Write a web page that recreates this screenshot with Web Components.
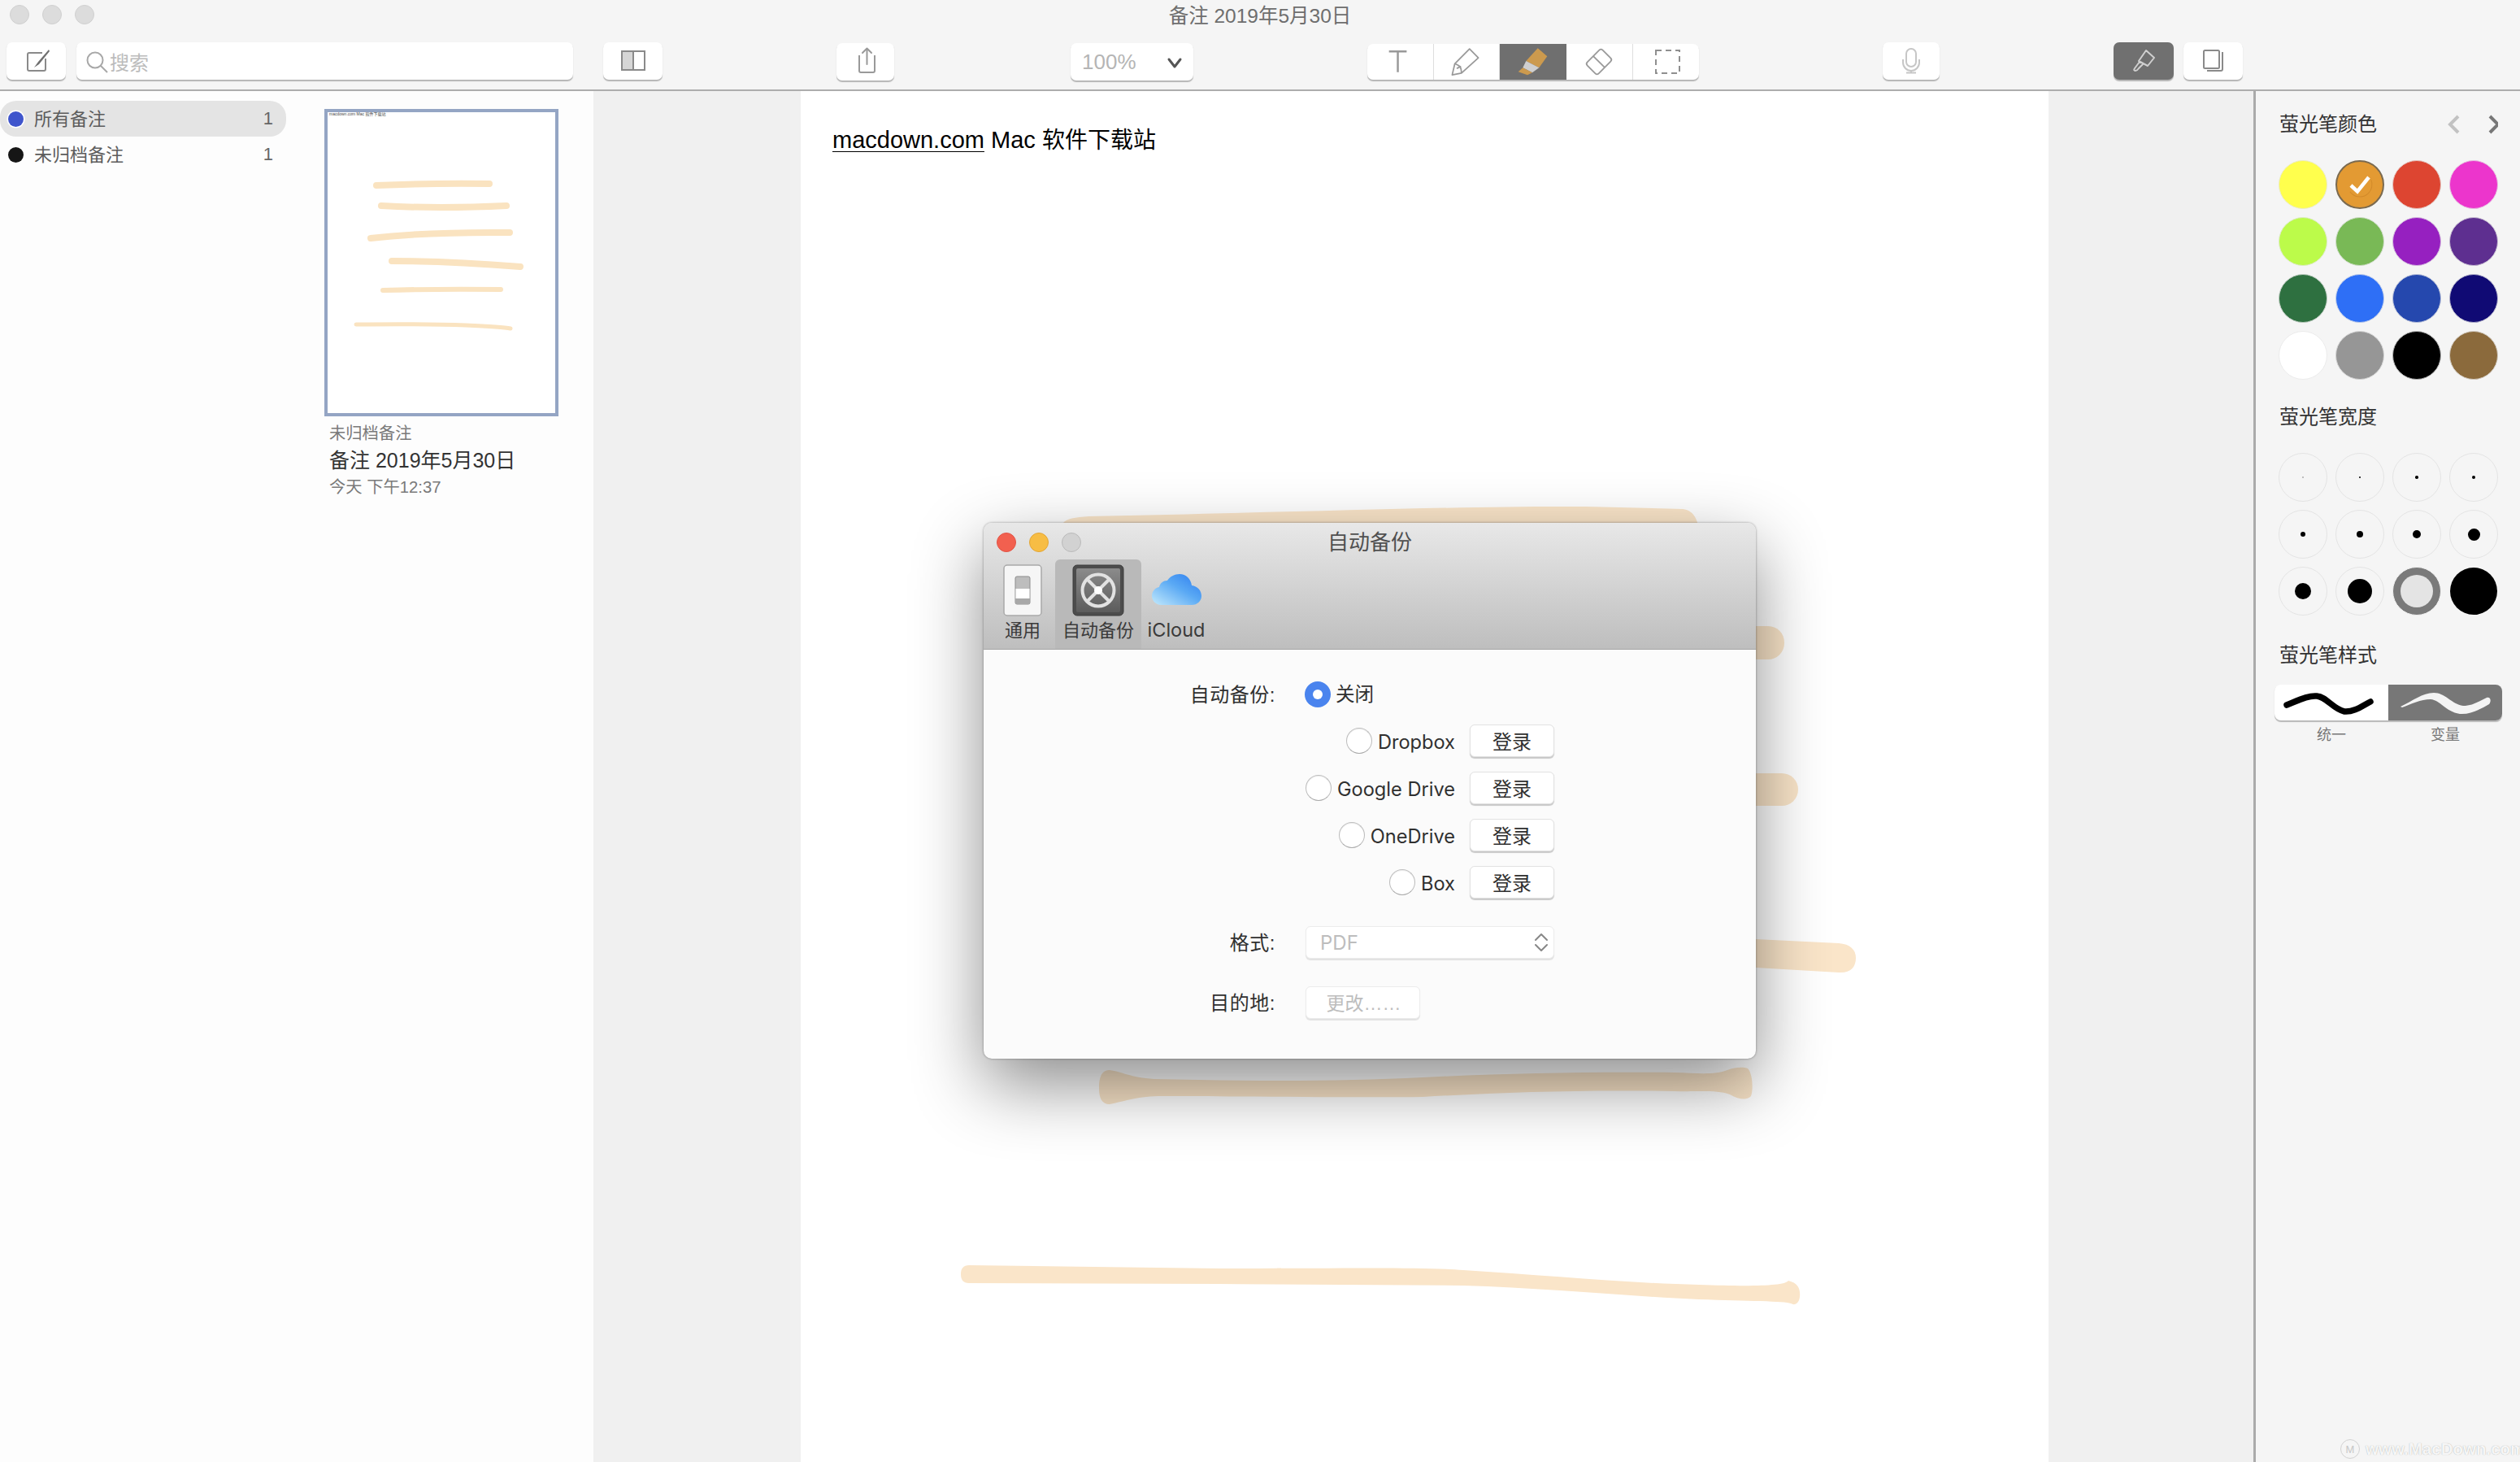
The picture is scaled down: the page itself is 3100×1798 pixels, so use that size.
<!DOCTYPE html>
<html lang="zh"><head><meta charset="utf-8"><title>备注</title>
<style>
html,body{margin:0;padding:0;width:3100px;height:1798px;overflow:hidden;background:#fff}
body{font-family:"Liberation Sans","Noto Sans CJK SC",sans-serif}
</style></head>
<body><n-app></n-app>
<script>
const def=(name,html)=>customElements.define(name,class extends HTMLElement{
  constructor(){super();this.attachShadow({mode:'open'}).innerHTML=html;}
});
const ST='fill="none" stroke-linecap="round" stroke-linejoin="round"';

def('n-lights',`<style>
:host{display:flex;gap:16px;align-items:center}
i{display:block;width:24px;height:24px;border-radius:50%;box-sizing:border-box;background:var(--a,#dcdcdc);border:1px solid var(--ab,#d0d0d0)}
i:nth-of-type(2){background:var(--b,#dcdcdc);border-color:var(--bb,#d0d0d0)}
i:nth-of-type(3){background:var(--c,#dcdcdc);border-color:var(--cb,#d0d0d0)}
</style><i></i><i></i><i></i>`);

def('n-btn',`<style>
:host{display:flex;box-sizing:border-box;flex:none;height:46px;background:#fff;border-radius:7px;box-shadow:0 1.5px 1px rgba(0,0,0,.26);align-items:center;overflow:hidden}
::slotted(svg){display:block}
</style><slot></slot>`);

def('n-toolbar',`<style>
:host{display:block;height:110px;background:#f5f5f5;border-bottom:2px solid #adadad;flex:none;color:#707070}
.t{display:grid;grid-template-columns:1fr auto 1fr;height:40px;align-items:center}
n-lights{margin-left:12px;margin-top:-4px}
.title{font-size:24.500px;line-height:40px;color:#6e6e6e}
.r{display:flex;margin-top:12px;padding-left:8px;align-items:flex-start}
.srch{color:#bcbcbc;font-size:24px}
.seg{height:100%;display:block;flex:none;border-right:1.5px solid #dedede;box-sizing:border-box}
.seg:last-child{border:0}
.z{color:#b5b5b5;font-size:26px;padding-left:14px;flex:1;line-height:46px}
</style>
<div class="t"><n-lights></n-lights><div class="title">备注 2019年5月30日</div><span></span></div>
<div class="r">
<n-btn style="width:73px"><svg width="73" height="46" viewBox="0 0 73 46"><path d="M44 13H28a2 2 0 0 0-2 2v18a2 2 0 0 0 2 2h18a2 2 0 0 0 2-2V20" fill="none" stroke="#8a8a8a" stroke-width="2"/><path d="M52 9l-13 15-5 7 6-4 13-16z" fill="#6f6f6f"/></svg></n-btn>
<n-btn class="srch" style="width:611px;margin-left:13px"><svg width="41" height="46" viewBox="0 0 41 46"><circle cx="23" cy="22" r="9.500" fill="none" stroke="#a8a8a8" stroke-width="2"/><path d="M30 29l8 8" stroke="#a8a8a8" stroke-width="2"/></svg>搜索</n-btn>
<n-btn style="width:73px;margin-left:37px"><svg width="73" height="46" viewBox="0 0 73 46"><rect x="23" y="11" width="14" height="23" fill="#d6d6d6"/><rect x="23" y="11" width="28" height="23" fill="none" stroke="#8a8a8a" stroke-width="2"/><path d="M37 11v23" stroke="#8a8a8a" stroke-width="2"/></svg></n-btn>
<n-btn style="width:71px;margin-left:214px;margin-top:1px"><svg width="71" height="46" viewBox="0 0 71 46"><path d="M29 16h-1v18a2 2 0 0 0 2 2h15a2 2 0 0 0 2-2V16h-1" fill="none" stroke="#999" stroke-width="2"/><path d="M37.500 26V7M32 12l5.500-5.500L43 12" ${ST} stroke="#999" stroke-width="2"/></svg></n-btn>
<n-btn style="width:151px;margin-left:217px;margin-top:1px"><span class="z">100%</span><svg width="50" height="46" viewBox="0 0 50 46" style="flex:none"><path d="M20 20l7 9 7-9" ${ST} stroke="#555" stroke-width="3"/></svg></n-btn>
<n-btn style="width:408px;height:44px;margin-left:214px;margin-top:2px">
<svg class="seg" width="82" viewBox="0 0 82 44"><path d="M27 9h22M38 9v26" fill="none" stroke="#999" stroke-width="2.500"/></svg>
<svg class="seg" width="81" viewBox="0 0 81 44"><path d="M44.300 6l11 11-21 19-11.600 2.300L26 24.300zM26 24.300Q30 26 32.700 28 34 31 34.300 36M29 30l4-2" ${ST} stroke="#999" stroke-width="1.800"/></svg>
<svg class="seg" width="82" viewBox="0 0 82 44" style="background:#6f6f6f;border:0"><path d="M46.700 5.300l11.600 10-10 14-16-8.300z" fill="#cc9a4e"/><path d="M32.300 21l16 8.300-8.300 6-11.700-6z" fill="#cfcfcf"/><path d="M28.300 29.300L40 35.300 34 38.300l-11.300-4z" fill="#cc9a4e"/></svg>
<svg class="seg" width="82" viewBox="0 0 82 44"><g transform="translate(40.500 22) rotate(45)" fill="none" stroke="#999" stroke-width="1.800"><rect x="-10" y="-13.500" width="20" height="27" rx="3"/><path d="M-10 0h20"/></g></svg>
<svg class="seg" width="81" viewBox="0 0 81 44"><rect x="28" y="8" width="29" height="28" fill="none" stroke="#8f8f8f" stroke-width="2" stroke-dasharray="7 5"/></svg>
</n-btn>
<n-btn style="width:70px;margin-left:226px"><svg width="70" height="46" viewBox="0 0 70 46"><rect x="29" y="8" width="12" height="22" rx="6" fill="none" stroke="#c6c6c6" stroke-width="2"/><path d="M25 21v4a10 10 0 0 0 20 0v-4M35 35v2M29 37.500h12" fill="none" stroke="#c6c6c6" stroke-width="2"/></svg></n-btn>
<n-btn style="width:74px;margin-left:214px;background:#707070"><svg width="74" height="46" viewBox="0 0 74 46"><path d="M40 10l10 9-8 10-11-6zM32 24l-6 8q-2 3 1 3 2 0 4-3l5-5" ${ST} stroke="#cfcfcf" stroke-width="2"/></svg></n-btn>
<n-btn style="width:73px;margin-left:12px"><svg width="73" height="46" viewBox="0 0 73 46"><rect x="25" y="10" width="19" height="22" rx="1.500" fill="none" stroke="#8a8a8a" stroke-width="2"/><path d="M48 12v21a2 2 0 0 1-2 2H29" fill="none" stroke="#8a8a8a" stroke-width="2"/></svg></n-btn>
</div>`);

def('n-row',`<style>
:host{display:flex;align-items:center;height:44px;width:352px;box-sizing:border-box;border-radius:20px;font-size:22px;color:#5c5c5c;padding-left:10px;padding-right:16px}
i{width:19px;height:19px;border-radius:50%;background:var(--dot);box-shadow:0 0 0 1.500px #fff;margin-right:13px;flex:none}
span{flex:1;padding-bottom:4px}
b{font-weight:400;font-size:22px;color:#666;padding-bottom:1px}
</style><i></i><span><slot></slot></span><b>1</b>`);

def('n-sidebar',`<style>
:host{display:block;width:352px;flex:none;background:#fdfdfd;padding-top:12px}
</style><n-row style="--dot:#3f55cc;background:#e4e4e4">所有备注</n-row><n-row style="--dot:#161616">未归档备注</n-row>`);

def('n-list',`<style>
:host{display:block;width:378px;flex:none;background:#fdfdfd;padding:22px 0 0 47px;box-sizing:border-box}
.th{width:288px;height:378px;box-sizing:border-box;border:4px solid #94a5c4;background:#fff;position:relative}
.th svg{display:block;position:absolute;left:-4px;top:-4px}
.tt{font-size:5px;line-height:5px;color:#444;margin:0 0 0 2px;white-space:nowrap}
.m{margin:5px 0 0 6px;line-height:33px;color:#7a7a7a;font-size:20.300px;white-space:nowrap}
.m b{display:block;font-weight:400;font-size:25px;color:#333}
</style>
<div class="th"><div class="tt">macdown.com Mac 软件下载站</div>
<svg width="288" height="378" viewBox="399 134 288 378" fill="none" stroke="#fae3c0" stroke-linecap="round">
<path d="M463 228q70-3 139-2" stroke-width="8"/>
<path d="M469 253q70 4 154 0" stroke-width="8"/>
<path d="M456 293q70-8 171-7" stroke-width="8"/>
<path d="M482 321q70 0 158 7" stroke-width="8"/>
<path d="M471 357q70-2 145-1" stroke-width="6"/>
<path d="M438 399q90-1 135 1t55 4" stroke-width="5"/>
</svg></div>
<div class="m">未归档备注<b>备注 2019年5月30日</b>今天 下午12:37</div>`);

def('n-doc',`<style>
:host{display:block;width:1535px;flex:none;background:#fff;position:relative;overflow:hidden}
svg{position:absolute;left:0;top:0}
p{margin:0;padding:40px 0 0 39px;font-size:29px;line-height:40px;color:#000;position:relative}
u{text-decoration:underline;text-decoration-thickness:1px;text-underline-offset:4px}
span{font-size:28px}
</style>
<svg width="1535" height="1686" viewBox="985 112 1535 1686" fill="#fae5c9">
<path d="M1304 680L1308 643C1312 638 1322 636 1340 635C1600 630 1800 622 1950 623L2070 626C2085 628 2092 640 2092 680Z"/>
<rect x="2000" y="770" width="195" height="41" rx="20"/>
<rect x="2000" y="951" width="212" height="40" rx="20"/>
<path d="M2000 1152L2160 1155L2262 1160C2276 1161 2283 1168 2283 1178C2283 1190 2276 1197 2262 1196L2160 1190L2000 1190Z"/>
<path d="M1352 1338C1352 1320 1358 1316 1365 1316C1380 1318 1390 1325 1420 1327C1550 1330 1650 1330 1750 1325C1850 1320 1950 1318 2060 1319C2090 1320 2110 1322 2125 1316C2135 1312 2145 1312 2150 1314C2156 1320 2157 1340 2154 1348C2150 1353 2140 1353 2128 1346C2110 1340 2090 1343 2060 1342C1950 1340 1850 1343 1750 1349C1650 1350 1500 1348 1430 1348C1400 1348 1385 1354 1365 1358C1355 1358 1352 1350 1352 1338Z"/>
<path d="M1182 1567C1182 1560 1185 1556 1192 1556L1500 1560C1650 1560 1750 1558 1800 1562C1900 1568 2000 1578 2090 1580C2150 1582 2195 1582 2200 1575C2212 1578 2215 1585 2214 1595C2213 1603 2208 1606 2203 1603C2195 1600 2150 1600 2090 1598C2000 1594 1900 1584 1800 1581L1500 1579L1192 1578C1185 1578 1182 1574 1182 1567Z"/>
</svg>
<p><u>macdown.com</u> Mac <span>软件下载站</span></p>`);

def('n-swatch',`<style>
:host{display:flex;align-items:center;justify-content:center;width:60px;height:60px;box-sizing:border-box;border-radius:50%;background:var(--c);border:1px solid color-mix(in srgb,var(--c) 22%,#e6e6e6)}
</style><slot></slot>`);

def('n-dot',`<style>
:host{display:flex;align-items:center;justify-content:center;width:60px;height:60px;box-sizing:border-box;border-radius:50%;border:1.500px solid #e4e4e4}
i{display:block;width:var(--s);height:var(--s);border-radius:50%;background:var(--d,#000)}
</style><i></i>`);

def('n-panel',`<style>
:host{display:block;width:325px;flex:none;background:#f5f5f5;padding:24px 0 0 28px;box-sizing:border-box;position:relative}
h4{margin:0 0 0 1px;font-weight:400;font-size:24px;line-height:34px;color:#333;display:flex;align-items:center}
h4 svg{margin-left:83px}
.g{display:grid;grid-template-columns:repeat(4,60px);gap:10px}
.c1{margin-top:27px}
.seg{display:flex;margin:19px 0 0 -5px;width:280px;height:44px;border-radius:8px;overflow:hidden;box-shadow:0 1.500px 1px rgba(0,0,0,.25);background:#fff}
.seg svg{display:block;flex:none}
.lb{display:flex;margin:6px 0 0 -5px;width:280px;font-size:18px;line-height:24px;color:#777;text-align:center}
.lb span{flex:1}
.wm{position:absolute;left:104px;top:1657px;display:flex;align-items:center;gap:7px;color:#f6f6f6;font:bold 20.500px "Liberation Sans",sans-serif;text-shadow:0 0 1px #a0a0a0;white-space:nowrap;line-height:26px}
.wm i{display:flex;align-items:center;justify-content:center;width:24px;height:24px;box-sizing:border-box;border:1.500px solid #d2d2d2;border-radius:50%;font:400 13px "Liberation Sans",sans-serif;color:#c8c8c8;text-shadow:none}
</style>
<h4>萤光笔颜色<svg width="66" height="24" viewBox="0 0 66 24"><path d="M17 2L7 12l10 10" fill="none" stroke="#c2c2c2" stroke-width="4"/><path d="M56 2l10 10-10 10" fill="none" stroke="#777" stroke-width="4"/></svg></h4>
<div class="g c1">
<n-swatch style="--c:#ffff4d"></n-swatch>
<n-swatch style="--c:#e39a33;border:2px solid #7a6a50"><svg width="36" height="36" viewBox="-18 -18 36 36"><circle r="15" fill="none" stroke="#d28a2a" stroke-width="1" stroke-dasharray="26 50" transform="rotate(45)"/><path d="M-11 1l8 7.500L11-9" fill="none" stroke="#fff" stroke-width="4.500"/></svg></n-swatch>
<n-swatch style="--c:#dd4531"></n-swatch><n-swatch style="--c:#ec35cc"></n-swatch>
<n-swatch style="--c:#bcfb4a"></n-swatch><n-swatch style="--c:#79b956"></n-swatch><n-swatch style="--c:#9620c0"></n-swatch><n-swatch style="--c:#5e2f90"></n-swatch>
<n-swatch style="--c:#2e7040"></n-swatch><n-swatch style="--c:#2e6ff6"></n-swatch><n-swatch style="--c:#2548ae"></n-swatch><n-swatch style="--c:#100a74"></n-swatch>
<n-swatch style="--c:#fff"></n-swatch><n-swatch style="--c:#969696"></n-swatch><n-swatch style="--c:#000"></n-swatch><n-swatch style="--c:#8b6a3c"></n-swatch>
</div>
<h4 style="margin-top:29px">萤光笔宽度</h4>
<div class="g" style="margin-top:27px">
<n-dot style="--s:2px;--d:#aaa"></n-dot><n-dot style="--s:2.500px"></n-dot><n-dot style="--s:3.500px"></n-dot><n-dot style="--s:4.500px"></n-dot>
<n-dot style="--s:6px"></n-dot><n-dot style="--s:8px"></n-dot><n-dot style="--s:10px"></n-dot><n-dot style="--s:15px"></n-dot>
<n-dot style="--s:20px"></n-dot><n-dot style="--s:30px"></n-dot>
<n-dot style="--s:40px;--d:#e4e4e4;background:#7a7a7a;border:1px solid #f0f0f0"></n-dot>
<n-dot style="--s:58px;border:0"></n-dot>
</div>
<h4 style="margin-top:32px">萤光笔样式</h4>
<div class="seg">
<svg width="140" height="44" viewBox="0 0 140 44"><path d="M15 25C30 19 42 13 52 14C64 15 72 30 86 33C98 34 108 26 118 21" fill="none" stroke="#000" stroke-width="7.500" stroke-linecap="round"/></svg>
<svg width="140" height="44" viewBox="0 0 140 44" style="background:#777"><path d="M15 27C30 20 42 10 56 10C70 10 78 24 92 26C104 26 112 20 121 16C126 15 127 20 124 24C112 31 100 37 88 36C70 33 64 19 52 18C40 18 28 24 17 28Z" fill="#f4f4f4"/></svg>
</div>
<div class="lb"><span>统一</span><span>变量</span></div>
<div class="wm"><i>M</i>www.MacDown.com</div>`);

def('n-radio',`<style>
:host{display:flex;align-items:center;gap:7px;font-family:Inter,"Noto Sans CJK SC",sans-serif;font-size:23.600px;color:#303030;white-space:nowrap}
i{width:32px;height:32px;flex:none;box-sizing:border-box;border-radius:50%;background:#fff;border:1.500px solid #bdbdbd;border-bottom-color:#a8a8a8;box-shadow:inset 0 1px 1px rgba(0,0,0,.08)}
:host([on]) {gap:6px}
:host([on]) i{background:#4a84ee;border:0;box-shadow:none;display:flex;align-items:center;justify-content:center}
:host([on]) i::after{content:"";width:12px;height:12px;border-radius:50%;background:#fff}
:host([on]) span{padding:0 0 4px}
span{padding-top:2px}
</style><i></i><span><slot></slot></span>`);

def('n-pbtn',`<style>
:host{display:flex;align-items:center;justify-content:center;box-sizing:border-box;height:40px;width:104px;background:#fff;border-radius:6px;border:1px solid #e2e2e2;box-shadow:0 1.500px 1px rgba(0,0,0,.2);font-size:24px;color:#303030;padding-bottom:2px}
:host([off]){color:#bdbdbd;border-color:#ececec;box-shadow:0 1.500px 1px rgba(0,0,0,.1);font-size:23px;padding-left:2px}
</style><slot></slot>`);

def('n-dialog',`<style>
:host{position:absolute;left:1210px;top:643px;width:950px;height:659px;display:flex;flex-direction:column;border-radius:10px;overflow:hidden;background:#fbfbfb;box-shadow:0 32px 85px rgba(0,0,0,.45),0 0 3px rgba(0,0,0,.4)}
.hd{height:156px;flex:none;box-sizing:border-box;background:linear-gradient(#e8e8e8,#bebebe);border-bottom:1px solid #a6a6a6}
.tt{display:grid;grid-template-columns:1fr auto 1fr;align-items:center;height:45px}
.tt n-lights{margin-left:16px;--a:#f2604f;--ab:#e25446;--b:#f7bd44;--bb:#e2a535;--c:#d2d2d2;--cb:#bababa}
.tt div{font-size:26px;color:#505050;line-height:45px;padding-top:2px}
.tabs{display:flex;height:110px;padding-left:16px;font-size:22px;color:#3a3a3a}
.tab{display:flex;flex-direction:column;align-items:center;padding-top:6px;box-sizing:border-box;white-space:nowrap}
.tab svg{display:block;flex:none}
.tab span{line-height:32px;margin-top:2px}
.bd{flex:1;padding-top:35px;font-size:24px;color:#303030}
.r{display:flex;align-items:center;height:40px;margin-top:18px}
.l{width:359px;text-align:right;flex:none;white-space:nowrap;letter-spacing:.5px;padding-bottom:3px}
.w{width:580px;display:flex;justify-content:flex-end;flex:none}
.sel{width:306px;height:40px;margin-left:37px;box-sizing:border-box;background:#fff;border-radius:6px;border:1px solid #ececec;box-shadow:0 1.500px 1px rgba(0,0,0,.1);display:flex;align-items:center;padding-left:17px;color:#bdbdbd;font:24px Inter,sans-serif;justify-content:space-between}
.sel svg{margin-right:7px}
</style>
<div class="hd">
<div class="tt"><n-lights></n-lights><div>自动备份</div><span></span></div>
<div class="tabs">
<div class="tab" style="width:64px"><svg width="48" height="64" viewBox="0 0 48 64"><rect x="1" y="1" width="46" height="62" rx="4" fill="#f6f6f6" stroke="#a9a9a9" stroke-width="1.500"/><rect x="15" y="15" width="18" height="34" rx="2" fill="#bdbdbd" stroke="#8d8d8d"/><rect x="15.500" y="30" width="17" height="12" fill="#fff"/><rect x="15.500" y="42" width="17" height="7" fill="#a8a8a8"/></svg><span>通用</span></div>
<div class="tab" style="width:106px;margin-left:8px;background:#b9b9b9;border-radius:6px 6px 0 0"><svg width="64" height="64" viewBox="0 0 64 64"><defs><linearGradient id="g" x1="0" y1="0" x2="0" y2="1"><stop offset="0" stop-color="#8b8b8b"/><stop offset="1" stop-color="#5c5c5c"/></linearGradient></defs><rect x="1" y="1" width="62" height="62" rx="5" fill="#4c4c4c" stroke="#3d3d3d"/><rect x="5" y="5" width="54" height="54" rx="2" fill="url(#g)"/><circle cx="32" cy="32" r="19.500" fill="none" stroke="#e2e2e2" stroke-width="4"/><path d="M18 18l28 28M46 18L18 46" stroke="#e2e2e2" stroke-width="4"/><circle cx="32" cy="32" r="5" fill="#fff"/></svg><span>自动备份</span></div>
<div class="tab" style="width:86px"><svg width="61" height="64" viewBox="0 0 61 64"><defs><linearGradient id="c" x1="0" y1="1" x2="1" y2="0"><stop offset="0" stop-color="#c2e9fc"/><stop offset=".55" stop-color="#5aa9f4"/><stop offset="1" stop-color="#2b7bef"/></linearGradient></defs><path d="M12 50C4 50 0 44 0 39C0 33 4 29 9 28C10 23 14 20 19 20C22 15 28 12 34 12C42 12 48 18 49 26C56 27 61 32 61 39C61 45 56 50 49 50Z" fill="url(#c)"/></svg><span style="font:23.500px Inter,sans-serif">iCloud</span></div>
</div></div>
<div class="bd">
<div class="r" style="margin-top:0"><div class="l">自动备份:</div><n-radio on style="margin-left:36px">关闭</n-radio></div>
<div class="r" style="margin-top:17px"><div class="w"><n-radio>Dropbox</n-radio></div><n-pbtn style="margin-left:18px">登录</n-pbtn></div>
<div class="r"><div class="w"><n-radio>Google Drive</n-radio></div><n-pbtn style="margin-left:18px">登录</n-pbtn></div>
<div class="r"><div class="w"><n-radio>OneDrive</n-radio></div><n-pbtn style="margin-left:18px">登录</n-pbtn></div>
<div class="r"><div class="w"><n-radio>Box</n-radio></div><n-pbtn style="margin-left:18px">登录</n-pbtn></div>
<div class="r" style="margin-top:34px"><div class="l">格式:</div><div class="sel">PDF<svg width="16" height="24" viewBox="0 0 16 24"><path d="M1 9l7-7 7 7M1 15l7 7 7-7" ${ST} stroke="#888" stroke-width="2"/></svg></div></div>
<div class="r" style="margin-top:34px"><div class="l">目的地:</div><n-pbtn off style="margin-left:37px;width:141px">更改……</n-pbtn></div>
</div>`);

def('n-app',`<style>
:host{display:flex;flex-direction:column;width:3100px;height:1798px;position:relative;overflow:hidden}
.m{display:flex;flex:1;min-height:0}
.gap{flex:none;background:#f0f0f0}
.sp{width:3px;flex:none;background:#aaa}
</style>
<n-toolbar></n-toolbar>
<div class="m"><n-sidebar></n-sidebar><n-list></n-list><div class="gap" style="width:255px"></div><n-doc></n-doc><div class="gap" style="width:252px"></div><div class="sp"></div><n-panel></n-panel></div>
<n-dialog></n-dialog>`);
</script></body></html>
